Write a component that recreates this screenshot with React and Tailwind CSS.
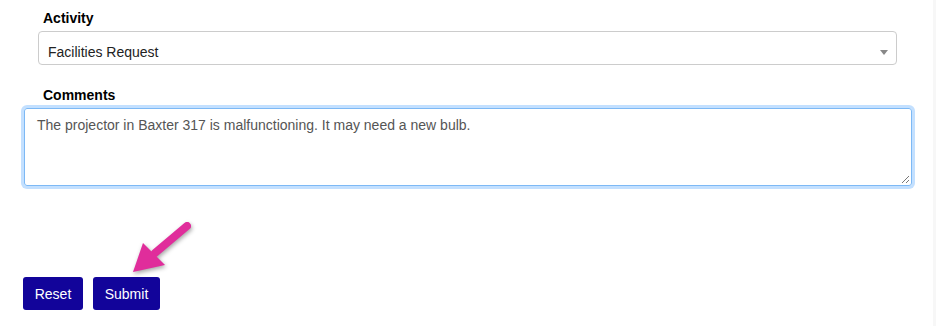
import React from "react";

const Arrow = () => (
  <svg
    className="absolute left-[125px] top-[218px] drop-shadow-[1px_2px_2px_rgba(0,0,0,0.35)]"
    width="70"
    height="60"
    viewBox="0 0 70 60"
  >
    <line x1="62" y1="8" x2="30" y2="35" stroke="#e02d9b" strokeWidth="8" strokeLinecap="round" />
    <polygon points="8,54 18,25 40,47" fill="#e02d9b" />
  </svg>
);

const App = () => {
  return (
    <div className="relative w-[936px] h-[326px] bg-white overflow-hidden font-['Liberation_Sans',Arial,sans-serif] text-[14px]">
      <div className="absolute right-0 top-0 h-full w-[3px] bg-[#f7f7f7]" />

      <div className="pt-[8px]">
        <div className="ml-[43px] font-bold leading-[20px] text-black">Activity</div>
        <div className="ml-[38px] mr-[39px] mt-[3px] h-[34px] border border-[#cccccc] rounded-[4px] pl-[9px] pt-[10px] leading-[20px] text-[#222] flex justify-between">
          <span>Facilities Request</span>
          <span className="mr-[8px] mt-[8px] w-0 h-0 border-l-[4px] border-r-[4px] border-t-[5px] border-l-transparent border-r-transparent border-t-[#888]" />
        </div>

        <div className="ml-[43px] mt-[20px] font-bold leading-[20px] text-black">Comments</div>
        <div className="relative ml-[24px] mr-[24px] mt-[3px] h-[78px] border border-[#7db9f5] rounded-[3px] ring-[3px] ring-[#c3e0ff] pl-[12px] pt-[6px] leading-[20px] text-[#555]">
          The projector in Baxter 317 is malfunctioning. It may need a new bulb.
          <svg className="absolute right-[1px] bottom-[1px]" width="9" height="9" viewBox="0 0 9 9">
            <line x1="8" y1="1" x2="1" y2="8" stroke="#777" strokeWidth="1" />
            <line x1="8" y1="5" x2="5" y2="8" stroke="#777" strokeWidth="1" />
          </svg>
        </div>

        <div className="ml-[23px] mt-[91px] flex gap-[10px]">
          <button className="h-[33px] w-[60px] rounded-[3px] bg-[#12049a] text-white leading-[20px]">
            Reset
          </button>
          <button className="h-[33px] w-[67px] rounded-[3px] bg-[#12049a] text-white leading-[20px]">
            Submit
          </button>
        </div>
      </div>

      <Arrow />
    </div>
  );
};

export default App;
